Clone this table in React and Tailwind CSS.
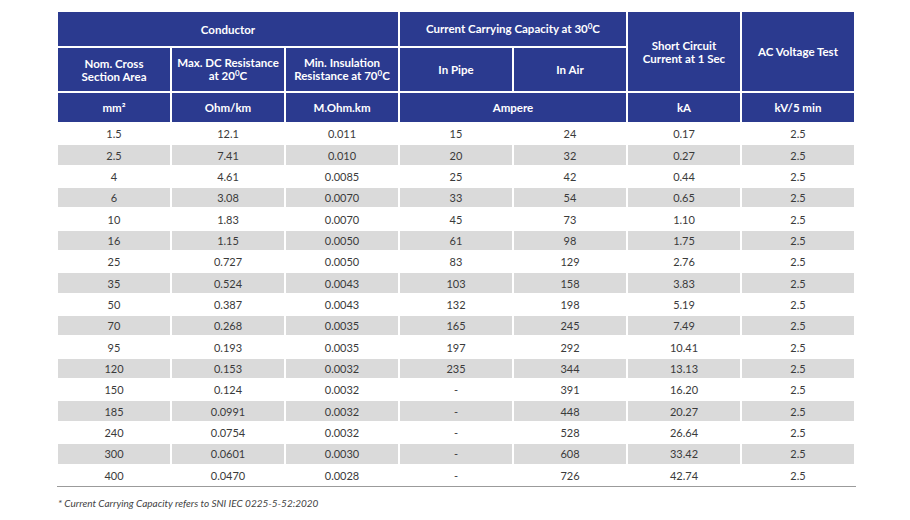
import React from 'react';

const rows = [
  ['1.5', '12.1', '0.011', '15', '24', '0.17', '2.5'],
  ['2.5', '7.41', '0.010', '20', '32', '0.27', '2.5'],
  ['4', '4.61', '0.0085', '25', '42', '0.44', '2.5'],
  ['6', '3.08', '0.0070', '33', '54', '0.65', '2.5'],
  ['10', '1.83', '0.0070', '45', '73', '1.10', '2.5'],
  ['16', '1.15', '0.0050', '61', '98', '1.75', '2.5'],
  ['25', '0.727', '0.0050', '83', '129', '2.76', '2.5'],
  ['35', '0.524', '0.0043', '103', '158', '3.83', '2.5'],
  ['50', '0.387', '0.0043', '132', '198', '5.19', '2.5'],
  ['70', '0.268', '0.0035', '165', '245', '7.49', '2.5'],
  ['95', '0.193', '0.0035', '197', '292', '10.41', '2.5'],
  ['120', '0.153', '0.0032', '235', '344', '13.13', '2.5'],
  ['150', '0.124', '0.0032', '-', '391', '16.20', '2.5'],
  ['185', '0.0991', '0.0032', '-', '448', '20.27', '2.5'],
  ['240', '0.0754', '0.0032', '-', '528', '26.64', '2.5'],
  ['300', '0.0601', '0.0030', '-', '608', '33.42', '2.5'],
  ['400', '0.0470', '0.0028', '-', '726', '42.74', '2.5'],
];

const th = 'bg-[#2b3a8f] text-white font-bold text-[11.5px] leading-[13px] text-center align-middle p-0';

// small raised "0" used as degree mark in the headers
const Deg = () => <span className="text-[8px] relative -top-[4px]">0</span>;

const App = () => {
  return (
    <div className="w-[910px] h-[520px] bg-white font-['Lato',sans-serif] pt-[10px]">
      <table className="ml-[56px] border-separate border-spacing-[2px] table-fixed w-[800px]">
        <thead>
          <tr>
            <th colSpan={3} className={`${th} h-[34px]`}>Conductor</th>
            <th colSpan={2} className={th}>Current Carrying Capacity at 30<Deg />C</th>
            <th rowSpan={2} className={th}>Short Circuit<br />Current at 1 Sec</th>
            <th rowSpan={2} className={th}>AC Voltage Test</th>
          </tr>
          <tr>
            <th className={`${th} h-[43px] w-[112px]`}>Nom. Cross<br />Section Area</th>
            <th className={`${th} w-[112px]`}>Max. DC Resistance<br />at 20<Deg />C</th>
            <th className={`${th} w-[112px]`}>Min. Insulation<br />Resistance at 70<Deg />C</th>
            <th className={`${th} w-[112px]`}>In Pipe</th>
            <th className={`${th} w-[112px]`}>In Air</th>
          </tr>
          <tr>
            <th className={`${th} h-[29px]`}>mm²</th>
            <th className={th}>Ohm/km</th>
            <th className={th}>M.Ohm.km</th>
            <th colSpan={2} className={th}>Ampere</th>
            <th className={th}>kA</th>
            <th className={th}>kV/5 min</th>
          </tr>
        </thead>
        <tbody>
          {rows.map((r, i) => (
            <tr key={i}>
              {r.map((v, j) => (
                <td
                  key={j}
                  className={`h-[19.35px] p-0 text-center align-middle text-[11px] leading-[13px] text-[#3a3a3a] ${i % 2 === 1 ? 'bg-[#dadada]' : 'bg-white'}`}
                >
                  {v}
                </td>
              ))}
            </tr>
          ))}
        </tbody>
      </table>
      <div className="ml-[57px] w-[799px] h-px bg-[#9b9b9b] -mt-[1px]" />
      <p className="ml-[58px] mt-[9px] text-[10px] italic text-[#444]">
        * Current Carrying Capacity refers to SNI IEC 0225-5-52:2020
      </p>
    </div>
  );
};

export default App;
